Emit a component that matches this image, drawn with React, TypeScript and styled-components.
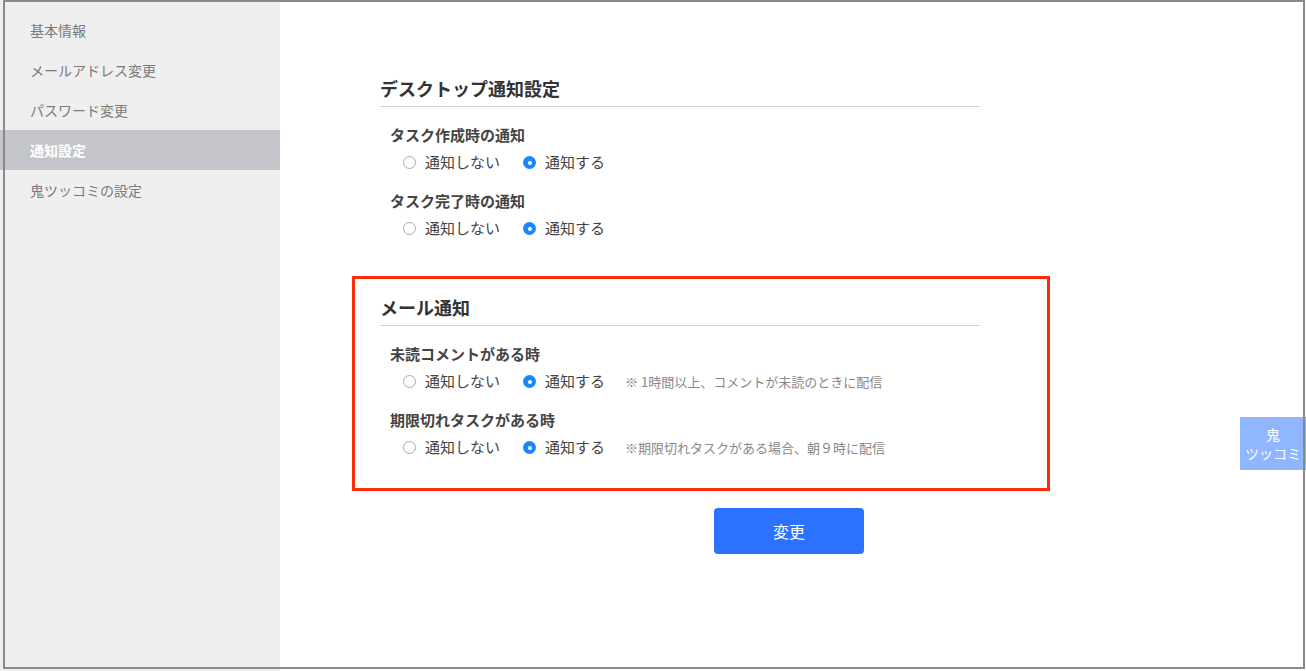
import React from "react";
import styled, { createGlobalStyle } from "styled-components";

const Global = createGlobalStyle`
  html, body { margin: 0; padding: 0; background: #fff; }
  body { font-family: "Noto Sans CJK JP", "Noto Sans", sans-serif; }
  * { box-sizing: border-box; }
`;

const Page = styled.div`
  display: flex;
  width: 1306px;
  height: 671px;
  overflow: hidden;
  position: relative;
`;

const Frame = styled.div`
  position: absolute;
  left: 3px;
  top: 0;
  width: 1302px;
  height: 669px;
  border: 2px solid #8a8a8a;
  pointer-events: none;
  z-index: 5;
`;

const Sidebar = styled.nav`
  width: 280px;
  flex-shrink: 0;
  background: #efefef;
  padding-top: 10px;
  display: flex;
  flex-direction: column;
`;

const NavItem = styled.div<{ $active?: boolean }>`
  height: 40px;
  display: flex;
  align-items: center;
  padding-left: 30px;
  padding-bottom: 1px;
  font-size: 14px;
  color: ${(p) => (p.$active ? "#fff" : "#7a7a7a")};
  font-weight: ${(p) => (p.$active ? 700 : 400)};
  background: ${(p) => (p.$active ? "#c4c5cb" : "transparent")};
`;

const Main = styled.main`
  flex: 1;
  padding: 57px 0 0 72px;
  display: flex;
  flex-direction: column;
`;

const Section = styled.section<{ $highlight?: boolean }>`
  width: 698px;
  border: 3px solid ${(p) => (p.$highlight ? "#ff2a0a" : "transparent")};
  padding: 16px 0 31px 25px;
  & + & {
    margin-top: 4px;
  }
`;

const Heading = styled.h2`
  margin: 0;
  width: 600px;
  font-size: 18px;
  line-height: 24px;
  font-weight: 700;
  color: #333;
  padding-bottom: 6px;
  border-bottom: 1px solid #cfcfcf;
`;

const Group = styled.div`
  padding-left: 10px;
  margin-top: 18px;
  & + & {
    margin-top: 19px;
  }
`;

const GroupLabel = styled.div`
  font-size: 15px;
  line-height: 20px;
  font-weight: 700;
  color: #444;
`;

const Options = styled.div`
  display: flex;
  align-items: center;
  margin-top: 7px;
  padding-left: 10px;
  height: 20px;
`;

const Option = styled.label`
  display: flex;
  align-items: center;
  font-size: 15px;
  line-height: 20px;
  color: #444;
  margin-right: 20px;
`;

const Circle = styled.span<{ $on?: boolean }>`
  width: 13px;
  height: 13px;
  border-radius: 50%;
  margin: 1px 9px 0 3px;
  box-sizing: border-box;
  display: flex;
  align-items: center;
  justify-content: center;
  background: ${(p) => (p.$on ? "#1a86ff" : "#fff")};
  border: ${(p) => (p.$on ? "none" : "1px solid #a9a9a9")};
  &::after {
    content: "";
    display: ${(p) => (p.$on ? "block" : "none")};
    width: 4px;
    height: 4px;
    border-radius: 50%;
    background: #fff;
  }
`;

const Note = styled.span`
  font-size: 13px;
  color: #888;
`;

const Footer = styled.div`
  margin-top: 17px;
  padding-left: 362px;
`;

const Button = styled.button`
  width: 150px;
  height: 46px;
  border: none;
  border-radius: 4px;
  background: #2a72ff;
  color: #fff;
  font-family: inherit;
  font-size: 16px;
`;

const SideTab = styled.div`
  position: absolute;
  right: 0;
  top: 417px;
  width: 66px;
  height: 53px;
  background: #8fb6ff;
  color: #fff;
  font-size: 14px;
  line-height: 19px;
  display: flex;
  flex-direction: column;
  align-items: center;
  justify-content: center;
  z-index: 3;
`;

type G = { label: string; note?: string };

const OptionGroup = ({ label, note }: G) => (
  <Group>
    <GroupLabel>{label}</GroupLabel>
    <Options>
      <Option>
        <Circle />
        通知しない
      </Option>
      <Option>
        <Circle $on />
        通知する
      </Option>
      {note && <Note>{note}</Note>}
    </Options>
  </Group>
);

export default function App() {
  const nav = ["基本情報", "メールアドレス変更", "パスワード変更", "通知設定", "鬼ツッコミの設定"];
  return (
    <Page>
      <Global />
      <Sidebar>
        {nav.map((n) => (
          <NavItem key={n} $active={n === "通知設定"}>
            {n}
          </NavItem>
        ))}
      </Sidebar>
      <Main>
        <Section>
          <Heading>デスクトップ通知設定</Heading>
          <OptionGroup label="タスク作成時の通知" />
          <OptionGroup label="タスク完了時の通知" />
        </Section>
        <Section $highlight>
          <Heading>メール通知</Heading>
          <OptionGroup label="未読コメントがある時" note="※ 1時間以上、コメントが未読のときに配信" />
          <OptionGroup label="期限切れタスクがある時" note="※期限切れタスクがある場合、朝９時に配信" />
        </Section>
        <Footer>
          <Button>変更</Button>
        </Footer>
      </Main>
      <SideTab>
        <span>鬼</span>
        <span>ツッコミ</span>
      </SideTab>
      <Frame />
    </Page>
  );
}
